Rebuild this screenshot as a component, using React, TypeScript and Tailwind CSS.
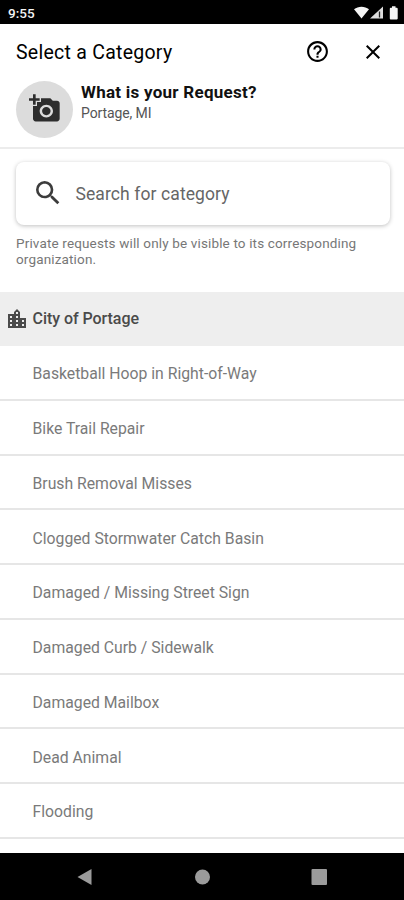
import {
  MdAddAPhoto,
  MdClose,
  MdHelpOutline,
  MdLocationCity,
  MdSearch,
} from "react-icons/md"

const categories = [
  "Basketball Hoop in Right-of-Way",
  "Bike Trail Repair",
  "Brush Removal Misses",
  "Clogged Stormwater Catch Basin",
  "Damaged / Missing Street Sign",
  "Damaged Curb / Sidewalk",
  "Damaged Mailbox",
  "Dead Animal",
  "Flooding",
]

function StatusBar() {
  return (
    <div className="flex h-[23.5px] shrink-0 items-center justify-between bg-black pt-[2px] pr-[6px] pl-2 text-[#f4f4f4]">
      <span className="pt-px text-[13.5px] leading-none font-medium">9:55</span>
      <svg viewBox="0 0 44 14" className="h-[14px] w-11" fill="currentColor">
        <path d="M0 3.2C4.2-.2 10.8-.2 15 3.2L7.5 12.500z" />
        <path d="M16 12.5 29 .5v12z" fill="#dedede" />
        <path d="M25.5 5.5v6" stroke="#222" strokeWidth="1.3" />
        <path d="M38 .3h3.500v1.500h1.300c.5 0 .9.400.9.900v9.800c0 .5-.4.900-.9.900h-6.100c-.5 0-.9-.4-.9-.9V2.700c0-.5.4-.9.900-.9H38z" />
      </svg>
    </div>
  )
}

function Header() {
  return (
    <header className="h-[125px] shrink-0 border-b-2 border-[#ececec] px-4">
      <div className="flex h-14 items-center justify-between text-black">
        <h1 className="pt-[2px] text-[19.5px] tracking-[0.26px]">Select a Category</h1>
        <div className="flex items-center gap-[31px] pr-[3px]">
          <MdHelpOutline className="h-[25px] w-[25px]" />
          <MdClose className="h-6 w-6" />
        </div>
      </div>
      <div className="flex items-start">
        <div className="mt-[1.5px] flex h-[57px] w-[57px] items-center justify-center rounded-full bg-[#dcdcdc]">
          <MdAddAPhoto className="mb-[2px] h-[31px] w-8 text-[#2d2d2d]" preserveAspectRatio="none" />
        </div>
        <div className="ml-2 pt-[2.5px]">
          <h2 className="text-[17px] leading-[21px] font-bold tracking-[0.26px] text-[#111]">What is your Request?</h2>
          <p className="text-[14px] leading-[21px] tracking-[-0.1px] text-[#555]">Portage, MI</p>
        </div>
      </div>
    </header>
  )
}

function SearchBox() {
  return (
    <div className="pt-[13px] pr-[14px] pl-4">
      <div className="flex h-[63px] items-center rounded-lg bg-white pl-4 shadow-[0_1px_4px_rgba(0,0,0,0.25)]">
        <MdSearch className="h-8 w-8 text-[#3c3c3c]" />
        <span className="ml-[11.5px] pt-[2px] text-[17.5px] tracking-[0.1px] text-[#666]">Search for category</span>
      </div>
      <p className="mt-[10.5px] text-[13.5px] leading-4 tracking-[0.15px] text-[#777]">
        Private requests will only be visible to its corresponding organization.
      </p>
    </div>
  )
}

export default function App() {
  return (
    <div className="flex h-[900px] w-[404px] flex-col overflow-hidden bg-white font-[Roboto,sans-serif]">
      <StatusBar />
      <Header />
      <div className="h-[143px] shrink-0">
        <SearchBox />
      </div>
      <main className="min-h-0 flex-1 overflow-hidden">
        <div className="flex h-[54.5px] items-center bg-[#eeeeee] pl-[4.5px] text-[#4a4a4a]">
          <MdLocationCity className="h-6 w-6" />
          <h3 className="ml-1 pt-px text-[16px] font-medium tracking-[-0.05px]">City of Portage</h3>
        </div>
        <ul>
          {categories.map((name) => (
            <li
              key={name}
              className="flex h-[54.75px] items-center border-b-2 border-[#e6e6e6] pt-[3.5px] pl-[32.5px] text-[15.75px] text-[#7a7a7a]"
            >
              {name}
            </li>
          ))}
        </ul>
      </main>
      <nav className="flex h-[47px] shrink-0 items-center bg-black pl-[77px]">
        <svg viewBox="0 0 250 16" className="h-4 w-[250px]" fill="#9b9b9b">
          <path d="M.5 8 14.5 0v16z" />
          <circle cx="125.5" cy="8" r="7.5" />
          <rect x="234.5" y="0" width="15.5" height="16" rx="1" />
        </svg>
      </nav>
    </div>
  )
}
